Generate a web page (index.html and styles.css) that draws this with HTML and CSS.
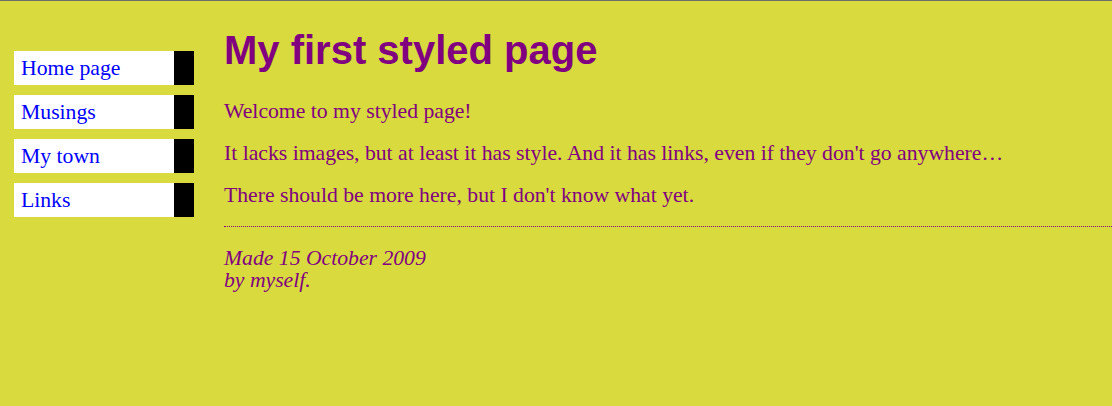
FILE: index.html
```html
<!DOCTYPE html>
<html>
<head>
<meta charset="utf-8">
<title>My first styled page</title>
<link rel="stylesheet" href="styles.css">
</head>
<body>
<div class="page">
  <ul class="navbar">
    <li><a href="#">Home page</a></li>
    <li><a href="#">Musings</a></li>
    <li><a href="#">My town</a></li>
    <li><a href="#">Links</a></li>
  </ul>
  <main class="content">
    <h1 class="title">My first styled page</h1>
    <p class="text">Welcome to my styled page!</p>
    <p class="text">It lacks images, but at least it has style. And it has links, even if they don't go anywhere&hellip;</p>
    <p class="text">There should be more here, but I don't know what yet.</p>
    <address class="footer">Made 15 October 2009<br>by myself.</address>
  </main>
</div>
</body>
</html>
```

FILE: styles.css
```css
html, body {
  margin: 0;
  padding: 0;
}
body {
  background-color: #d8da3d;
  color: #800080;
  font-family: "Liberation Serif", "Times New Roman", serif;
  font-size: 21.7px;
  border-top: 1px solid #6d6d6d;
  min-height: 405px;
}
.page {
  display: flex;
  align-items: flex-start;
}
.navbar {
  list-style: none;
  margin: 40px 0 0 14px;
  padding: 0;
  width: 180px;
  flex: none;
}
.navbar li {
  background: #ffffff;
  margin: 10px 0;
  padding: 6px 6px 6px 7px;
  line-height: 22px;
  border-right: 20px solid #000000;
}
.navbar a {
  color: #0000ff;
  text-decoration: none;
}
.content {
  flex: 1;
  margin-left: 30px;
  min-width: 0;
}
.title {
  font-family: "Liberation Sans", Arial, sans-serif;
  font-weight: bold;
  font-size: 40px;
  line-height: 46px;
  margin: 26px 0 27px;
}
.text {
  margin: 20px 0;
  line-height: 22px;
}
.footer {
  margin-top: 20px;
  padding-top: 20px;
  border-top: 1px dotted #800080;
  font-style: italic;
  line-height: 22px;
}
```
